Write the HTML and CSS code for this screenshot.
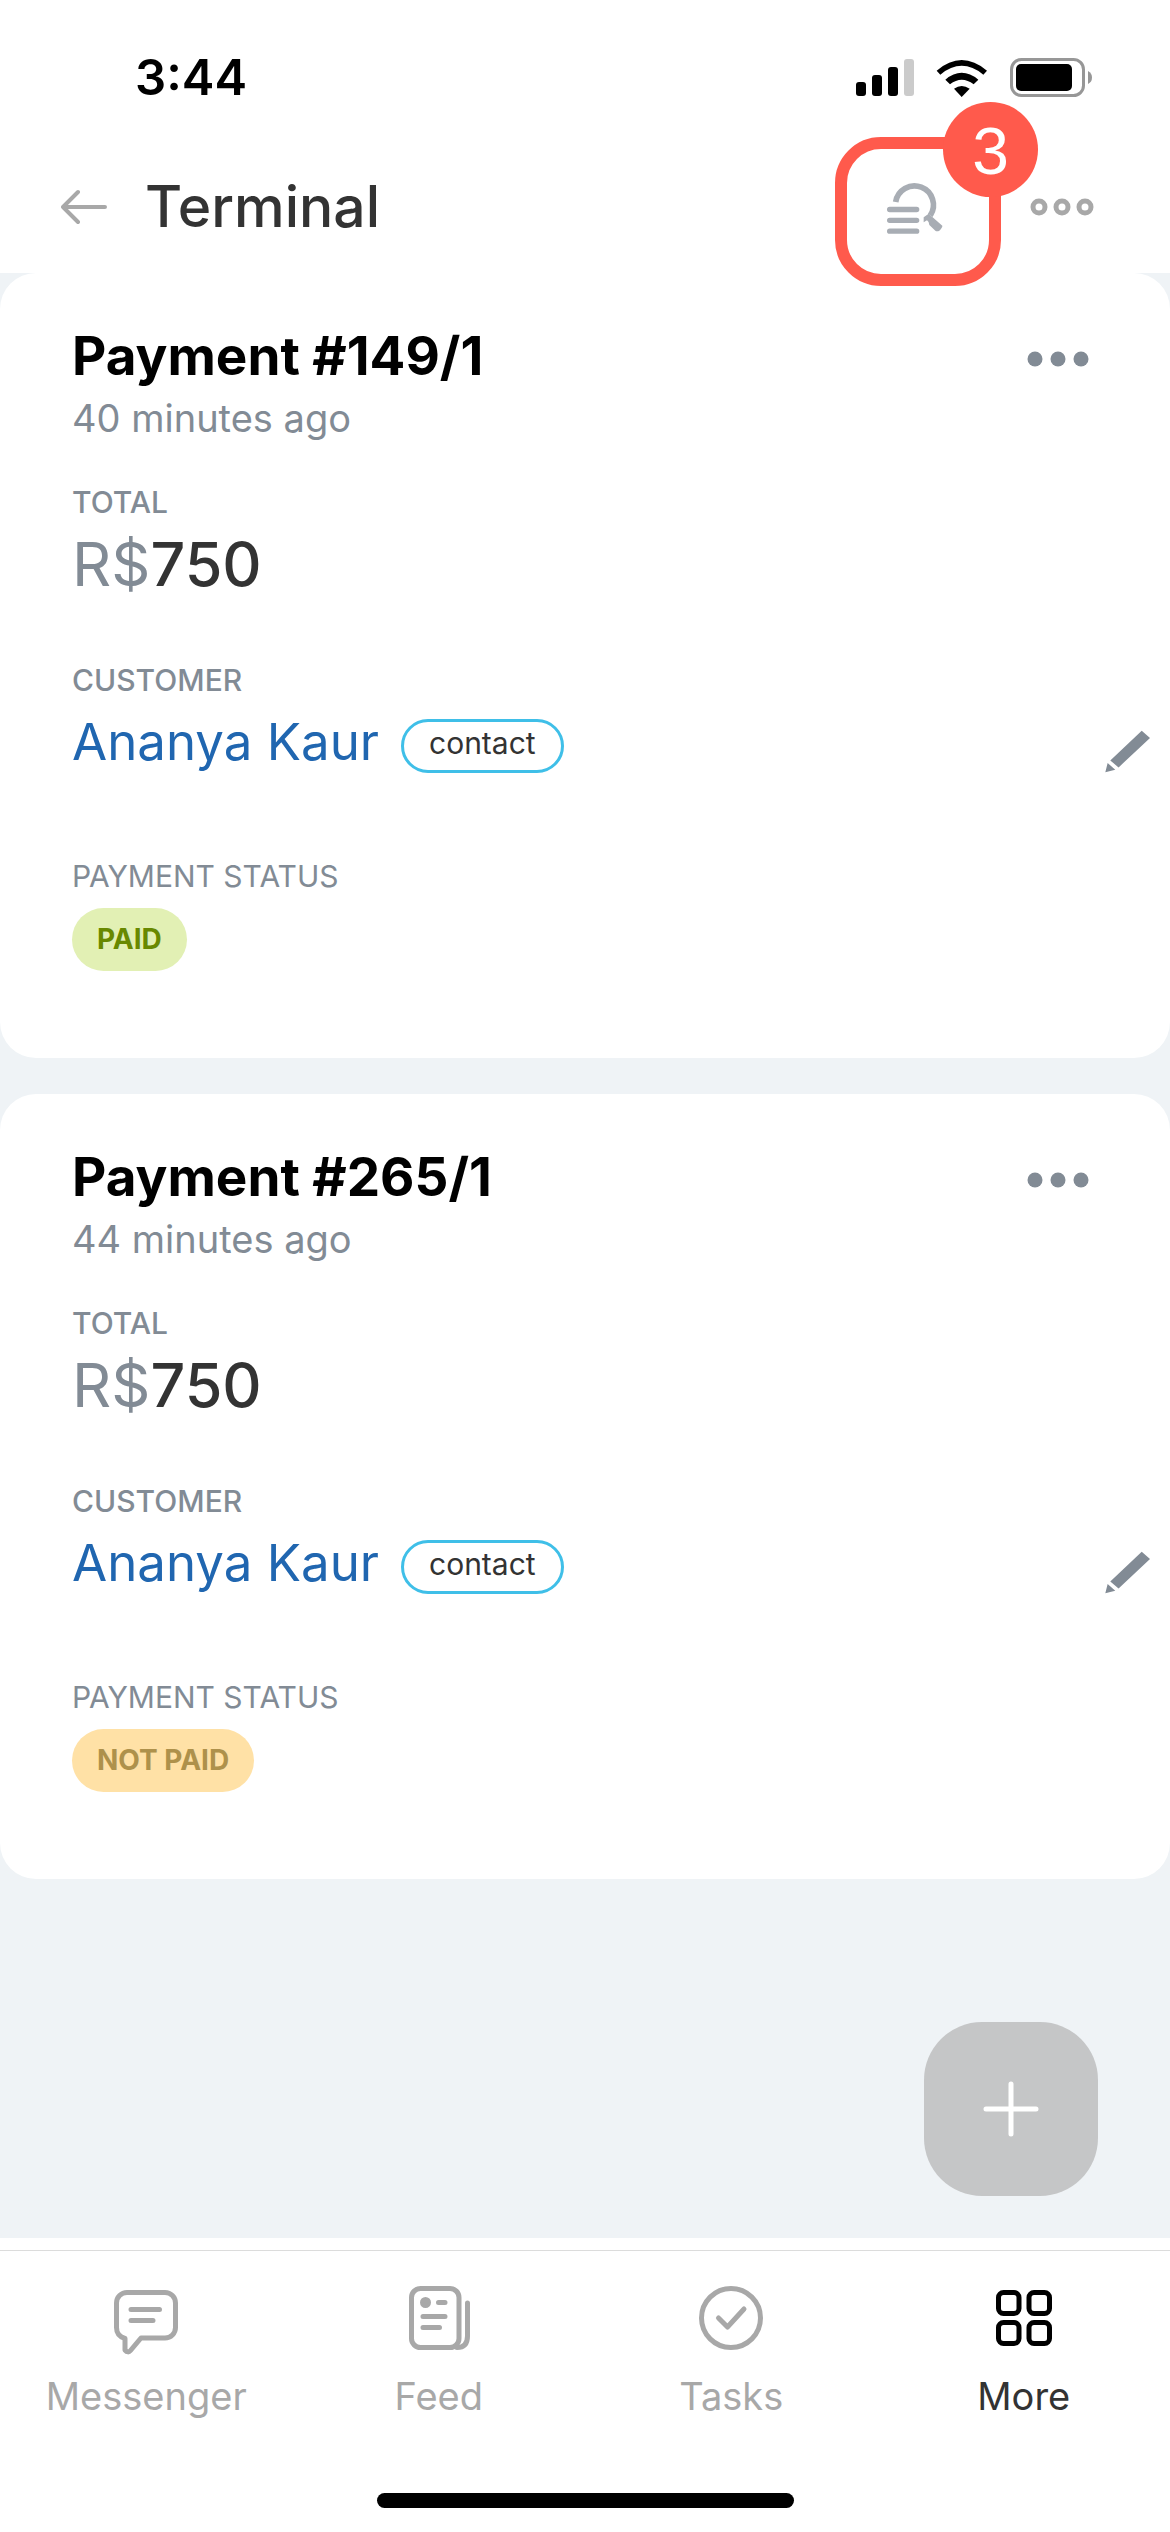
FILE: index.html
```html
<!DOCTYPE html>
<html lang="en">
<head>
  <meta charset="UTF-8">
  <meta name="viewport" content="width=device-width, initial-scale=1.0">
  <title>Terminal</title>
  <link rel="stylesheet" href="styles.css">
</head>
<body>
  <header class="header">
    <div class="status-bar">
      <span class="status-time">3:44</span>
      <div class="status-icons">
        <svg class="signal" viewBox="0 0 58 38">
          <rect x="0" y="23" width="10" height="14" rx="3"/>
          <rect x="16" y="16" width="10" height="21" rx="3"/>
          <rect x="32" y="8" width="10" height="29" rx="3"/>
          <rect x="48" y="0" width="10" height="37" rx="3" fill="#cbcbcb"/>
        </svg>
        <svg class="wifi" viewBox="408 84 154 114">
          <path d="M409 119Q484 55 560 119L549 131Q484 78 420 131Z"/>
          <path d="M435 146Q484 105 534 146L520 160Q484 133 449 160Z"/>
          <path d="M461 173Q484 157 508 173L484 198Z"/>
        </svg>
        <svg class="battery" viewBox="0 0 82 40">
          <rect x="1.5" y="1.5" width="72" height="36" rx="10" fill="none" stroke="#979797" stroke-width="3"/>
          <rect x="6" y="6" width="56" height="27" rx="5"/>
          <path d="M78 13Q82 15 82 19.500Q82 24 78 26Z" fill="#979797"/>
        </svg>
      </div>
    </div>

    <div class="top-bar">
      <button class="icon-button back-button" aria-label="Back">
        <svg viewBox="0 0 46 36" fill="none" stroke="#a8a8a8" stroke-width="4" stroke-linecap="round" stroke-linejoin="round">
          <path d="M44 18H2M17 3L2 18L17 33"/>
        </svg>
      </button>
      <h1>Terminal</h1>
      <button class="icon-button search-button" aria-label="Search and filter">
        <svg viewBox="258 450 174 162">
          <path d="M287 516A57 57 0 1 1 391 556" fill="none" stroke="#a8adb4" stroke-width="17"/>
          <path d="M386 551L427 587Q428 592 418 602Q411 606 406 602L388 585Q387 574 381 571L371 577V562Z" fill="#a8adb4"/>
          <path d="M269 538.500H350M269 571H350M269 603.500H350" stroke="#a8adb4" stroke-width="16" stroke-linecap="round"/>
        </svg>
        <span class="badge">3</span>
      </button>
      <button class="icon-button menu-button" aria-label="Menu">
        <svg viewBox="0 0 64 18" fill="none" stroke="#a8a8a8" stroke-width="5">
          <circle cx="9" cy="9" r="6"/>
          <circle cx="32" cy="9" r="6"/>
          <circle cx="55" cy="9" r="6"/>
        </svg>
      </button>
    </div>
  </header>

  <main class="payments">
    <article class="card">
      <div class="card-head">
        <h2>Payment #149/1</h2>
        <button class="icon-button dots-button" aria-label="Payment actions">
          <svg viewBox="0 0 62 16">
            <circle cx="8" cy="8" r="7.500"/>
            <circle cx="31" cy="8" r="7.500"/>
            <circle cx="54" cy="8" r="7.500"/>
          </svg>
        </button>
      </div>
      <p class="time">40 minutes ago</p>

      <div class="field field-total">
        <div class="label">TOTAL</div>
        <div class="amount"><span class="currency">R$</span>750</div>
      </div>

      <div class="field">
        <div class="label">CUSTOMER</div>
        <div class="customer">
          <a class="customer-name" href="#">Ananya Kaur</a>
          <span class="tag">contact</span>
          <button class="icon-button edit-button" aria-label="Edit customer">
            <svg viewBox="374 1226 136 128">
              <path d="M485 1227L510 1249L415 1338L390 1317ZM382 1325L405 1345L375 1353Z"/>
            </svg>
          </button>
        </div>
      </div>

      <div class="field">
        <div class="label label-light">PAYMENT STATUS</div>
        <span class="status status-paid">PAID</span>
      </div>
    </article>

    <article class="card">
      <div class="card-head">
        <h2>Payment #265/1</h2>
        <button class="icon-button dots-button" aria-label="Payment actions">
          <svg viewBox="0 0 62 16">
            <circle cx="8" cy="8" r="7.500"/>
            <circle cx="31" cy="8" r="7.500"/>
            <circle cx="54" cy="8" r="7.500"/>
          </svg>
        </button>
      </div>
      <p class="time">44 minutes ago</p>

      <div class="field field-total">
        <div class="label">TOTAL</div>
        <div class="amount"><span class="currency">R$</span>750</div>
      </div>

      <div class="field">
        <div class="label">CUSTOMER</div>
        <div class="customer">
          <a class="customer-name" href="#">Ananya Kaur</a>
          <span class="tag">contact</span>
          <button class="icon-button edit-button" aria-label="Edit customer">
            <svg viewBox="374 1226 136 128">
              <path d="M485 1227L510 1249L415 1338L390 1317ZM382 1325L405 1345L375 1353Z"/>
            </svg>
          </button>
        </div>
      </div>

      <div class="field">
        <div class="label label-light">PAYMENT STATUS</div>
        <span class="status status-unpaid">NOT PAID</span>
      </div>
    </article>

    <button class="add-button" aria-label="Add payment">
      <svg viewBox="0 0 56 56" fill="none" stroke="#fff" stroke-width="5" stroke-linecap="round">
        <path d="M28 3V53M3 28H53"/>
      </svg>
    </button>
  </main>

  <footer class="footer">
    <nav class="tabs">
      <a class="tab" href="#">
        <svg viewBox="0 0 64 70">
          <path d="M13 6.500H51A10.500 10.500 0 0 1 61.500 17V41.500A10.500 10.500 0 0 1 51 52H27L16.500 64.500Q14 67.500 11 64V52.500Q2.500 50 2.500 41.500V17A10.500 10.500 0 0 1 13 6.500Z"/>
          <path d="M17 23.500H45.500M17 34.500H39"/>
        </svg>
        Messenger
      </a>
      <a class="tab" href="#">
        <svg viewBox="0 0 64 70">
          <rect x="4.500" y="2.500" width="47.500" height="59" rx="9"/>
          <path d="M60.500 17V50Q60.500 61.500 50 61.500"/>
          <path d="M31.500 16.500H38M16 30.500H38M16 41.500H32.500"/>
          <circle cx="18.500" cy="16.500" r="3" fill="#a8a8a8"/>
        </svg>
        Feed
      </a>
      <a class="tab" href="#">
        <svg viewBox="0 0 64 70">
          <circle cx="32" cy="32" r="29.500"/>
          <path d="M19.500 32L28.500 41L45 23"/>
        </svg>
        Tasks
      </a>
      <a class="tab active" href="#" aria-current="page">
        <svg viewBox="0 0 64 70">
          <rect x="6.500" y="6.500" width="20.500" height="21" rx="5"/>
          <rect x="37" y="6.500" width="20.500" height="21" rx="5"/>
          <rect x="6.500" y="36.500" width="20.500" height="21" rx="5"/>
          <rect x="37" y="36.500" width="20.500" height="21" rx="5"/>
        </svg>
        More
      </a>
    </nav>
    <div class="home-indicator"></div>
  </footer>
</body>
</html>
```
FILE: styles.css
```css
* {
  margin: 0;
  padding: 0;
  box-sizing: border-box;
}

body {
  font-family: Inter, 'Liberation Sans', sans-serif;
  background: #eff3f6;
  color: #333;
  min-height: 100vh;
  display: flex;
  flex-direction: column;
}

svg {
  display: block;
}

a {
  color: inherit;
  text-decoration: none;
}

.icon-button {
  display: flex;
  align-items: center;
  justify-content: center;
  background: none;
  border: none;
  cursor: pointer;
}

/* Header */
.header {
  position: relative;
  z-index: 1;
  background: #fff;
}

.status-bar {
  display: flex;
  align-items: center;
  justify-content: space-between;
  padding: 42px 78px 27px 135px;
  color: #000;
}

.status-time {
  font-size: 49px;
  font-weight: 600;
  line-height: 72px;
}

.status-icons {
  display: flex;
  align-items: center;
  gap: 22px;
}

.signal {
  width: 58px;
  height: 38px;
}

.wifi {
  width: 52px;
  height: 38px;
}

.battery {
  width: 82px;
  height: 40px;
}

.top-bar {
  display: flex;
  align-items: center;
  height: 132px;
  padding: 0 76px 0 61px;
}

.back-button svg {
  width: 46px;
  height: 36px;
}

.top-bar h1 {
  margin-left: 38px;
  font-size: 57px;
  font-weight: 500;
  line-height: 72px;
}

.search-button {
  position: relative;
  width: 160px;
  height: 132px;
  margin-left: auto;
  margin-right: 35px;
}

.search-button svg {
  width: 58px;
  height: 54px;
}

/* Highlight frame around the search button */
.search-button::after {
  content: '';
  position: absolute;
  top: -4px;
  right: -6px;
  bottom: -13px;
  left: 0;
  border: 12px solid #ff5a4c;
  border-radius: 46px;
}

.badge {
  position: absolute;
  z-index: 1;
  top: -39px;
  right: -43px;
  width: 95px;
  height: 95px;
  border-radius: 50%;
  background: #ff5a4c;
  color: #fff;
  font-family: 'Liberation Sans', sans-serif;
  font-size: 66px;
  line-height: 98px;
}

.menu-button svg {
  width: 64px;
  height: 18px;
}

/* Payment cards */
.payments {
  position: relative;
  flex: 1;
  display: flex;
  flex-direction: column;
  gap: 36px;
  padding-bottom: 358px;
}

.card {
  background: #fff;
  border-radius: 36px;
  padding: 51px 20px 87px 72px;
}

.card-head {
  display: flex;
  justify-content: space-between;
  padding-right: 61px;
}

.card h2 {
  color: #000;
  font-size: 53px;
  font-weight: 700;
  line-height: 64px;
}

.dots-button {
  height: 70px;
}

.dots-button svg {
  width: 62px;
  height: 16px;
  fill: #828b95;
}

.time {
  color: #828b95;
  font-size: 38px;
  line-height: 48px;
}

.field {
  margin-top: 62px;
}

.field-total {
  margin-top: 42px;
}

.label {
  margin-bottom: 8px;
  color: #828b95;
  font-size: 30px;
  font-weight: 500;
  line-height: 36px;
}

.label-light {
  margin-bottom: 14px;
  font-weight: 400;
}

.amount {
  font-size: 61px;
  font-weight: 500;
  line-height: 72px;
}

.currency {
  color: #828b95;
  font-weight: 400;
}

.customer {
  display: flex;
  align-items: flex-start;
}

.customer-name {
  color: #2066b0;
  font-size: 51px;
  line-height: 72px;
}

.tag {
  margin: 13px 0 0 22px;
  padding: 0 25px 6px;
  border: 3px solid #3fbfe8;
  border-radius: 27px;
  font-size: 30px;
  line-height: 42px;
}

.edit-button {
  height: 90px;
  margin-left: auto;
}

.edit-button svg {
  width: 45px;
  height: 43px;
  fill: #828b95;
}

.status {
  display: block;
  width: fit-content;
  padding: 0 25px;
  border-radius: 32px;
  font-size: 28px;
  font-weight: 700;
  line-height: 63px;
}

.status-paid {
  background: #e2f0b4;
  color: #688800;
}

.status-unpaid {
  background: #ffe1a6;
  color: #ae914b;
}

.add-button {
  position: absolute;
  right: 72px;
  bottom: 42px;
  display: flex;
  align-items: center;
  justify-content: center;
  width: 174px;
  height: 174px;
  border: none;
  border-radius: 58px;
  background: #c5c6c7;
  cursor: pointer;
}

.add-button svg {
  width: 56px;
  height: 56px;
}

/* Bottom tabs */
.footer {
  padding: 12px 0 24px;
  background: #fff;
}

.tabs {
  display: grid;
  grid-template-columns: repeat(4, 1fr);
  padding: 35px 0 73px;
  border-top: 1px solid #dcdcdc;
}

.tab {
  display: flex;
  flex-direction: column;
  align-items: center;
  gap: 16px;
  color: #a8a8a8;
  font-size: 38px;
  line-height: 48px;
}

.tab svg {
  width: 64px;
  height: 70px;
  fill: none;
  stroke: #a8a8a8;
  stroke-width: 5;
  stroke-linecap: round;
  stroke-linejoin: round;
}

.tab.active {
  color: #333;
}

.tab.active svg {
  stroke: #000;
}

.home-indicator {
  width: 417px;
  max-width: 60%;
  height: 15px;
  margin: 0 auto;
  border-radius: 8px;
  background: #000;
}
```
